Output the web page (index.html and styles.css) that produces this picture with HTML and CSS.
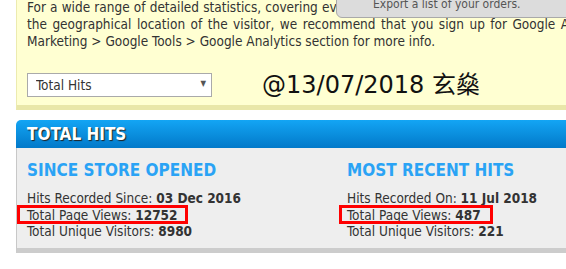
FILE: index.html
```html
<!DOCTYPE html>
<html lang="en">
  <head>
    <meta charset="UTF-8" />
    <meta name="viewport" content="width=device-width, initial-scale=1.0" />
    <title>Hits Counter</title>
    <link rel="stylesheet" href="styles.css">
  </head>
  <body>
    <div class="tooltip">Export a list of your orders.</div>
    <div class="page">
      <div class="notice">
        <p class="notice-text">
          <span class="line line-1">For a wide range of detailed statistics, covering everything from search engine keywords to</span>
          <span class="line line-2">the geographical location of the visitor, we recommend that you sign up for Google Analytics. See the</span>
          <span class="line">Marketing &gt; Google Tools &gt; Google Analytics section for more info.</span>
        </p>
        <div class="notice-row">
          <div class="select-wrap">
            <select class="select">
              <option>Total Hits</option>
              <option>Page Views</option>
              <option>Unique Visitors</option>
            </select>
            <span class="select-arrow">&#9660;</span>
          </div>
          <div class="stamp">@13/07/2018 玄燊</div>
        </div>
      </div>

      <div class="panel">
        <div class="panel-head">TOTAL HITS</div>
        <div class="panel-body">
          <div class="col">
            <h3>SINCE STORE OPENED</h3>
            <div class="stat">Hits Recorded Since: <b>03 Dec 2016</b></div>
            <div class="stat"><span class="hl">Total Page Views: <b>12752</b></span></div>
            <div class="stat">Total Unique Visitors: <b>8980</b></div>
          </div>
          <div class="col">
            <h3>MOST RECENT HITS</h3>
            <div class="stat">Hits Recorded On: <b>11 Jul 2018</b></div>
            <div class="stat"><span class="hl hl-right">Total Page Views: <b>487</b></span></div>
            <div class="stat">Total Unique Visitors: <b>221</b></div>
          </div>
        </div>
      </div>
    </div>
  </body>
</html>
```

FILE: styles.css
```css
body {
  margin: 0;
  overflow: hidden;
  background: #fff;
  color: #333;
  font-family: "DejaVu Sans Condensed", "DejaVu Sans", sans-serif;
  font-stretch: condensed;
  font-size: 13.5px;
}
.page {
  margin-left: 16px;
  width: 640px;
}
.notice {
  margin-top: -1px;
  padding: 0 10px 8px 10px;
  background: #ffffd2;
  border-left: 1px solid #ecebb0;
  border-bottom: 5px solid #e9e7a9;
}
.notice-text {
  margin: 0;
  line-height: 17px;
}
.line {
  display: block;
  white-space: nowrap;
}
.line-1 {
  word-spacing: 0.3px;
}
.line-2 {
  word-spacing: 1.6px;
}
.notice-row {
  display: flex;
  align-items: center;
  margin-top: 23px;
}
.select-wrap {
  position: relative;
  width: 185px;
}
.select {
  appearance: none;
  display: block;
  width: 100%;
  height: 24px;
  padding: 0 8px;
  background: #fff;
  border: 1px solid #aaa;
  border-radius: 0;
  color: #333;
  font-family: inherit;
  font-stretch: condensed;
  font-size: 13.5px;
}
.select-arrow {
  position: absolute;
  right: 6px;
  top: 6px;
  font-size: 8px;
  color: #555;
  pointer-events: none;
}
.stamp {
  margin-left: 50px;
  color: #111;
  font-size: 24px;
  line-height: 24px;
  font-family: "DejaVu Sans", "Noto Sans CJK SC", sans-serif;
  font-stretch: normal;
}
.tooltip {
  position: absolute;
  top: -8px;
  left: 336px;
  width: 260px;
  height: 24px;
  padding-left: 36px;
  line-height: 22px;
  background: #dcdcdc;
  border: 1px solid #a9a9a9;
  border-radius: 0 0 0 6px;
  color: #555;
  font-size: 12px;
}
.panel {
  margin-top: 10px;
}
.panel-head {
  height: 28px;
  padding-left: 11px;
  line-height: 28px;
  background: linear-gradient(#13a5f4, #0279c9);
  border-radius: 5px 5px 0 0;
  color: #fff;
  font-size: 17px;
  font-weight: bold;
  text-shadow: 1px 1px 1px #222;
}
.panel-body {
  display: flex;
  height: 100px;
  padding-left: 10px;
  background: #eee;
  border-left: 1px solid #c8c8c8;
  border-bottom: 5px solid #ccc;
}
.col {
  flex: 0 0 320px;
}
.col h3 {
  margin: 12px 0 10px;
  color: #2aa3f5;
  font-size: 17px;
  line-height: 20px;
}
.stat {
  line-height: 16.5px;
}
.stat b {
  color: #333;
}
.hl {
  position: relative;
}
.hl::after {
  content: "";
  position: absolute;
  left: -10px;
  right: -10px;
  top: -2px;
  bottom: -1px;
  border: 3px solid #f00;
}
.hl-right::after {
  left: -8px;
  right: -12px;
}
```
